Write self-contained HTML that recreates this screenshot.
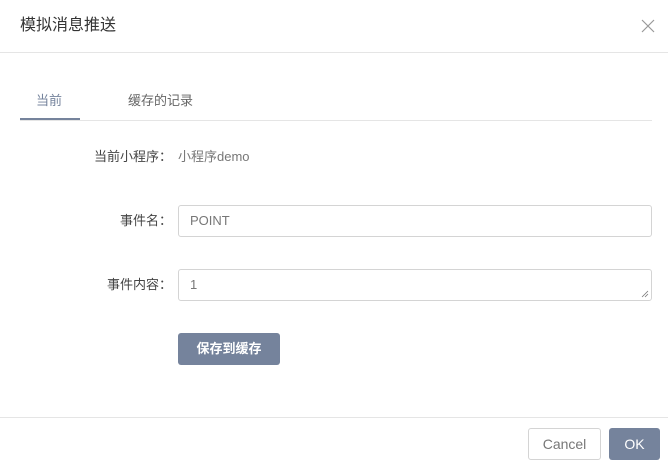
<!DOCTYPE html>
<html><head><meta charset="utf-8"><style>
*{box-sizing:border-box;margin:0;padding:0}
body{width:668px;height:470px;background:#fff;position:relative;font-family:"Liberation Sans","Noto Sans CJK SC",sans-serif;font-size:13px;color:#555;overflow:hidden}
.a{position:absolute}
.title{left:20px;top:15px;font-size:16px;color:#333;line-height:22px}
.hl{left:0;top:52px;width:668px;height:1px;background:#e5e5e5}
.tabline{left:20px;top:120px;width:632px;height:1px;background:#e5e5e5}
.tabul{left:20px;top:118px;width:60px;height:2px;background:#75839c}
.lbl{text-align:right;width:172px;left:0;color:#444;line-height:18px}
.inp{left:178px;width:474px;height:32px;border:1px solid #d4d4d4;border-radius:3px;padding-left:11px;line-height:30px;color:#777;font-size:13px}
.btn{border-radius:3px;height:32px;line-height:32px;text-align:center;font-size:13px}
</style></head><body>
<div class="a title">模拟消息推送</div>
<svg class="a" style="left:641px;top:19px" width="14" height="14" viewBox="0 0 14 14"><path d="M1 1L13 13M13 1L1 13" stroke="#999" stroke-width="1.2"/></svg>
<div class="a hl"></div>
<div class="a" style="left:36px;top:92px;color:#75839c;line-height:18px">当前</div>
<div class="a" style="left:128px;top:92px;color:#666;line-height:18px">缓存的记录</div>
<div class="a tabline"></div>
<div class="a tabul"></div>
<div class="a lbl" style="top:148px">当前小程序：</div>
<div class="a" style="left:178px;top:148px;line-height:18px;color:#777">小程序demo</div>
<div class="a lbl" style="top:212px">事件名：</div>
<div class="a inp" style="top:205px">POINT</div>
<div class="a lbl" style="top:276px">事件内容：</div>
<div class="a inp" style="top:269px">1</div>
<svg class="a" style="left:641px;top:290px" width="8" height="8"><path d="M7 1L1 7M7 4L4 7" stroke="#777" stroke-width="0.8"/></svg>
<div class="a btn" style="left:178px;top:333px;width:102px;background:#75839c;color:#fff;font-weight:bold">保存到缓存</div>
<div class="a hl" style="top:417px"></div>
<div class="a btn" style="left:528px;top:428px;width:73px;border:1px solid #d4d4d4;color:#777;font-size:14px;line-height:30px">Cancel</div>
<div class="a btn" style="left:609px;top:428px;width:51px;background:#75839c;color:#fff;font-size:14px">OK</div>
</body></html>
